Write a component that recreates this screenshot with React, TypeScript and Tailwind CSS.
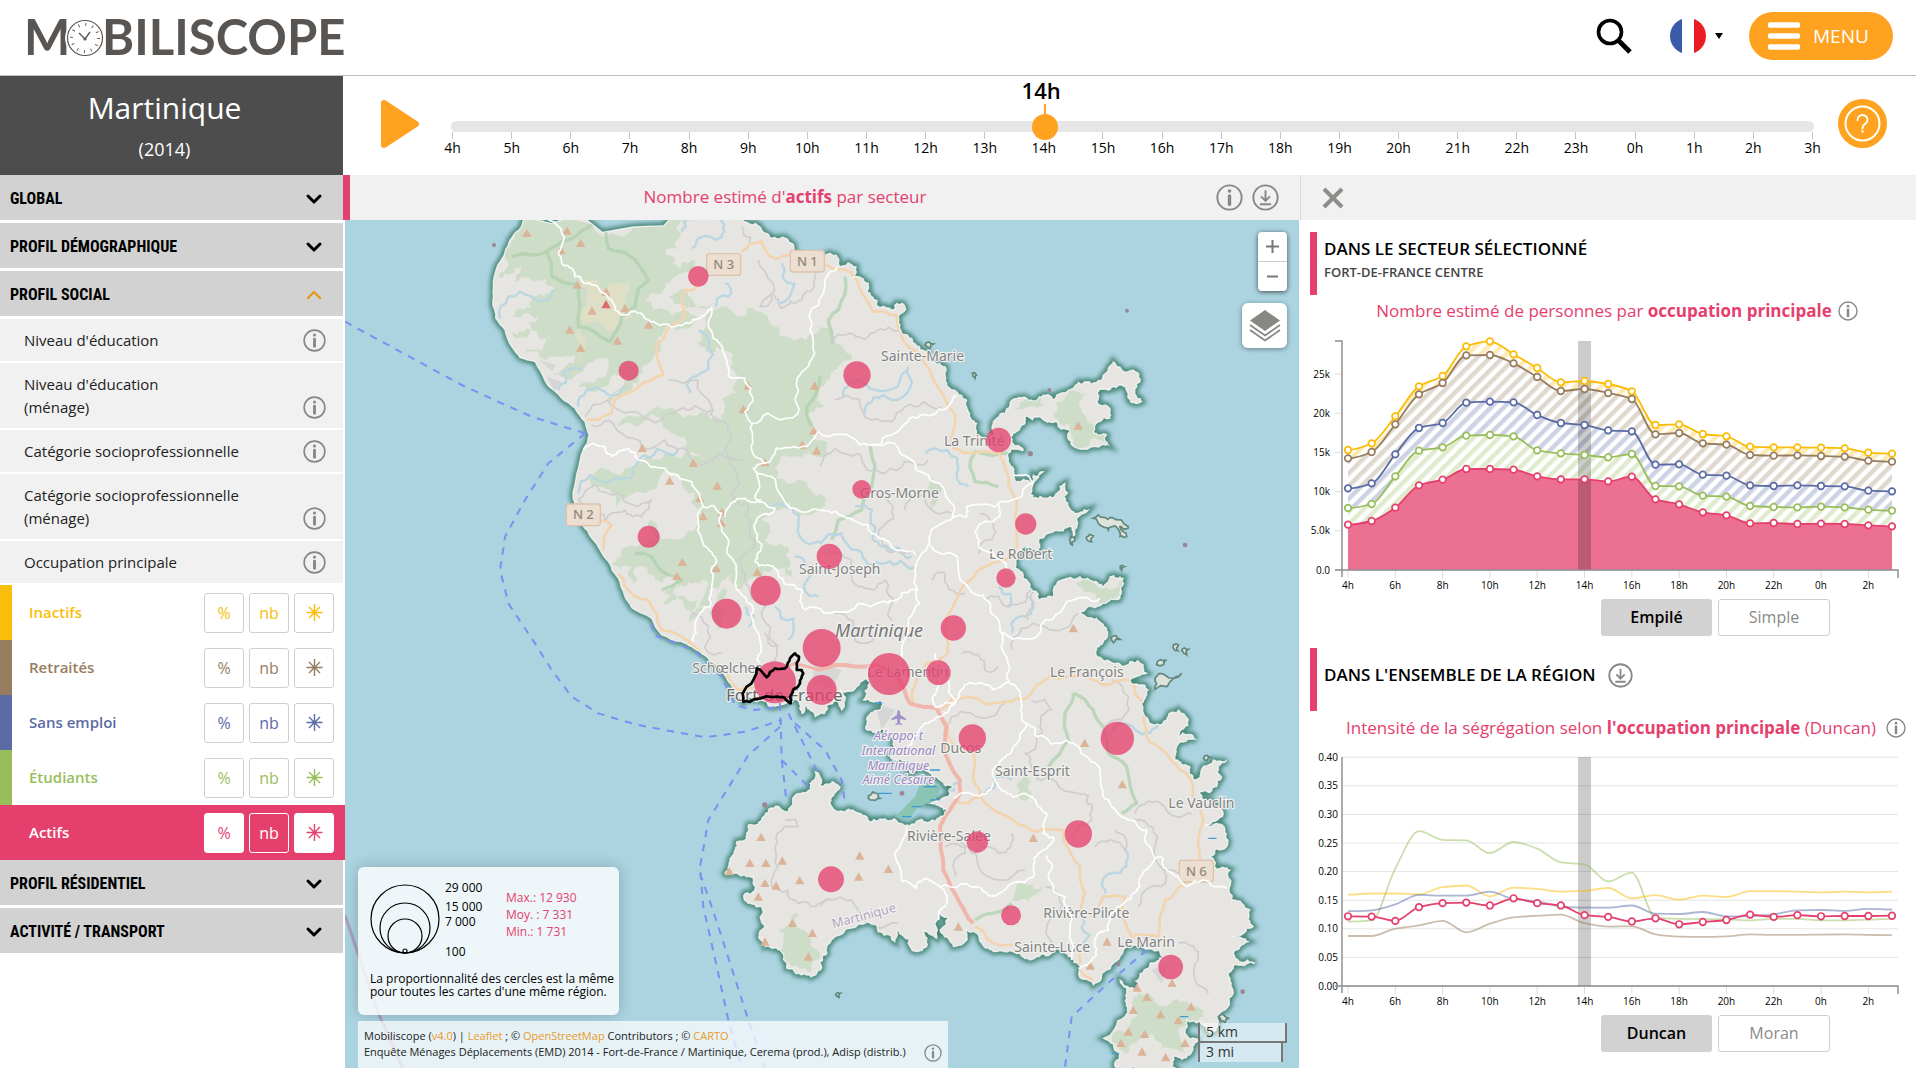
import React from "react";

const HOURS = ["4h", "5h", "6h", "7h", "8h", "9h", "10h", "11h", "12h", "13h", "14h", "15h", "16h", "17h", "18h", "19h", "20h", "21h", "22h", "23h", "0h", "1h", "2h", "3h"];

type Pt = [number, number];

/* ---------- icons ---------- */

function InfoIcon({ size = 24 }: { size?: number }) {
  return (
    <svg width={size} height={size} viewBox="0 0 24 24" className="shrink-0" aria-hidden="true">
      <circle cx="12" cy="12" r="10.8" fill="none" stroke="#878787" strokeWidth="1.7" />
      <circle cx="12" cy="6.2" r="1.6" fill="#878787" />
      <path d="M12 10.500v7.500" stroke="#878787" strokeWidth="3" strokeLinecap="round" />
    </svg>
  );
}

function DownloadIcon({ size = 24 }: { size?: number }) {
  return (
    <svg width={size} height={size} viewBox="0 0 24 24" className="shrink-0" aria-hidden="true">
      <g fill="none" stroke="#878787" strokeWidth="1.7">
        <circle cx="12" cy="12" r="10.8" />
        <path d="M12 5.5v9M8 11l4 4 4-4M7 18h10" />
      </g>
    </svg>
  );
}

function StarIcon() {
  return (
    <svg width="17" height="17" viewBox="0 0 17 17" aria-hidden="true">
      <path d="M8.500 0v17M0.500 8.500h16M3 3l11 11M14 3L3 14" stroke="currentColor" strokeWidth="1.4" fill="none" />
    </svg>
  );
}

function Chevron({ up }: { up?: boolean }) {
  return (
    <svg width="18" height="12" viewBox="0 0 18 12" aria-hidden="true">
      <path d={up ? "M3 9l6-6 6 6" : "M3 3l6 6 6-6"} fill="none" stroke={up ? "#e8961e" : "#000"} strokeWidth={up ? 2.4 : 3} strokeLinecap="round" strokeLinejoin="round" />
    </svg>
  );
}

/* ---------- header ---------- */

function Logo() {
  return (
    <a href="#" aria-label="Mobiliscope" className="ml-[22px] mt-[3px]">
      <svg width="330" height="60" viewBox="-6 -10 330 60" role="img" className="overflow-visible">
        <g fill="#595552" fontFamily="Lato, sans-serif" fontWeight="700" fontSize="49">
          <text x="-4" y="37">M</text>
          <text x="74" y="37">BILISCOPE</text>
        </g>
        <ellipse cx="57" cy="20" rx="20" ry="19" fill="#fff" />
        <circle cx="57" cy="20" r="17.500" fill="none" stroke="#595552" strokeWidth="1.2" />
        <circle cx="57" cy="20" r="13.500" fill="none" stroke="#595552" strokeWidth="3" strokeDasharray="0.9 6.170" />
        <path d="M51 15l6 6 5-7" fill="none" stroke="#595552" strokeWidth="1.4" />
        <circle cx="57" cy="21" r="1.600" fill="#595552" />
      </svg>
    </a>
  );
}

function Header() {
  return (
    <header className="flex h-[76px] items-center border-b border-[#bdbdbd] bg-white pb-[3px]">
      <Logo />
      <div className="ml-auto mr-[23px] flex items-center">
        <button aria-label="Rechercher" className="mr-[38px]">
          <svg width="36" height="36" viewBox="0 0 36 36">
            <circle cx="14" cy="14" r="11.500" fill="none" stroke="#000" strokeWidth="3.600" />
            <path d="M22 22l12 12" stroke="#000" strokeWidth="5" />
          </svg>
        </button>
        <button aria-label="Langue" className="mr-[26px] flex items-center gap-[9px]">
          <svg width="36" height="36" viewBox="0 0 36 36">
            <clipPath id="flag"><circle cx="18" cy="18" r="18" /></clipPath>
            <g clipPath="url(#flag)">
              <path d="M0 0h12v36H0z" fill="#3b5aa8" />
              <path d="M24 0h12v36H24z" fill="#eb1c26" />
            </g>
          </svg>
          <svg width="8" height="6" viewBox="0 0 8 6"><path d="M0 0h8L4 6z" /></svg>
        </button>
        <button className="flex h-12 w-[144px] items-center gap-[13px] rounded-3xl bg-[#ffa21f] pl-[19px] text-[19px] text-white">
          <svg width="32" height="28" viewBox="0 0 32 28">
            <path d="M2.500 3h27M2.500 14h27M2.500 25h27" stroke="#fff" strokeWidth="5.500" strokeLinecap="round" />
          </svg>
          MENU
        </button>
      </div>
    </header>
  );
}

/* ---------- sidebar ---------- */

const SUBITEMS = [
  ["Niveau d'éducation"],
  ["Niveau d'éducation", "(ménage)"],
  ["Catégorie socioprofessionnelle"],
  ["Catégorie socioprofessionnelle", "(ménage)"],
  ["Occupation principale"],
];

const GROUPS = [
  { name: "Inactifs", bar: "bg-[#f9be0b]", text: "text-[#f9be0b]" },
  { name: "Retraités", bar: "bg-[#977d60]", text: "text-[#977d60]" },
  { name: "Sans emploi", bar: "bg-[#5a6ba5]", text: "text-[#5a6ba5]" },
  { name: "Étudiants", bar: "bg-[#98be5c]", text: "text-[#98be5c]" },
];

function Section({ label, up }: { label: string; up?: boolean }) {
  return (
    <button className="mb-[3px] flex h-[45px] w-full items-center justify-between bg-[#d2d2d2] pl-[10px] pr-[20px] pt-[2px] text-left font-['Liberation_Sans_Narrow','Roboto_Condensed','Liberation_Sans',sans-serif] text-base font-bold text-black">
      {label}
      <Chevron up={up} />
    </button>
  );
}

function Sidebar() {
  const box = "flex h-10 w-10 items-center justify-center rounded-[3px] border text-base";
  return (
    <nav className="w-[343px] shrink-0">
      <div className="flex h-[99px] flex-col items-center bg-[#4d4d4d] pr-[14px] pt-[10px] text-white">
        <h1 className="text-[30px] leading-[44px]">Martinique</h1>
        <p className="mt-[3px] text-lg leading-8">(2014)</p>
      </div>
      <Section label="GLOBAL" />
      <Section label="PROFIL DÉMOGRAPHIQUE" />
      <Section label="PROFIL SOCIAL" up />
      <ul>
        {SUBITEMS.map((lines) => (
          <li key={lines.join()} className="mb-[2px] flex items-end justify-between bg-[#f1f1f1] pb-[9px] pl-[24px] pr-[17px] pt-[10px] text-[15px] leading-[23px] text-[#222]">
            <a href="#">{lines.map((l) => <span key={l} className="block">{l}</span>)}</a>
            <button aria-label="Informations"><InfoIcon size={23} /></button>
          </li>
        ))}
      </ul>
      {GROUPS.map((g) => (
        <div key={g.name} className={"flex h-[55px] items-center gap-[5px] pr-[9px] " + g.text}>
          <span className={"h-full w-3 " + g.bar} />
          <span className="ml-3 flex-1 text-[15px] font-semibold">{g.name}</span>
          <button className={box + " border-[#cfcfcf]"}>%</button>
          <button className={box + " border-[#cfcfcf]"}>nb</button>
          <button className={box + " border-[#cfcfcf]"} aria-label="Oursins"><StarIcon /></button>
        </div>
      ))}
      <div className="-mr-[2px] flex h-[55px] items-center gap-[5px] bg-[#e5406d] pl-[29px] pr-[11px] text-[#e5406d]">
        <span className="flex-1 text-[15px] font-semibold text-white">Actifs</span>
        <button className={box + " border-white bg-white"}>%</button>
        <button className={box + " border-white text-white"}>nb</button>
        <button className={box + " border-white bg-white"} aria-label="Oursins"><StarIcon /></button>
      </div>
      <Section label="PROFIL RÉSIDENTIEL" />
      <Section label="ACTIVITÉ / TRANSPORT" />
    </nav>
  );
}

/* ---------- timeline ---------- */

function Timeline() {
  return (
    <div className="flex h-[99px] items-start pl-[38px] pr-[29px]">
      <button aria-label="Lecture" className="mt-6">
        <svg width="38" height="48" viewBox="0 0 38 48">
          <path d="M3 3v42L35 24z" fill="#ffa21f" stroke="#ffa21f" strokeWidth="6" strokeLinejoin="round" />
        </svg>
      </button>
      <div className="relative ml-8 mt-[45px] min-w-0 flex-1">
        <output className="absolute -top-[46px] left-[43.3%] -translate-x-1/2 text-[22px] font-semibold leading-[30px] text-black">14h</output>
        <span className="absolute -top-[17px] left-[43.5%] h-3 w-[2px] bg-[#ffa21f]" />
        <input
          type="range" min={0} max={23} defaultValue={10} aria-label="Heure"
          className="relative block h-[11px] w-full appearance-none rounded-full bg-[#e6e6e6] [&::-webkit-slider-thumb]:h-[26px] [&::-webkit-slider-thumb]:w-[26px] [&::-webkit-slider-thumb]:appearance-none [&::-webkit-slider-thumb]:rounded-full [&::-webkit-slider-thumb]:bg-[#ffa21f]"
        />
        <div className="-mx-[28px] grid grid-cols-24 text-center text-sm leading-[18px] text-black">
          {HOURS.map((h) => (
            <div key={h} className="flex flex-col items-center">
              <span className="h-[7px] w-px bg-[#c4c4c4]" />
              {h}
            </div>
          ))}
        </div>
      </div>
      <button aria-label="Aide" className="ml-6 mt-[23px]">
        <svg width="49" height="49" viewBox="0 0 49 49">
          <circle cx="24.500" cy="24.500" r="24.500" fill="#ffa21f" />
          <circle cx="24.500" cy="24.500" r="17" fill="none" stroke="#fff" strokeWidth="2" />
          <path d="M19.500 21a5 4.800 0 1 1 8 3.600c-1.800 1.300-3 2.300-3 5" fill="none" stroke="#fff" strokeWidth="1.900" strokeLinecap="round" />
          <circle cx="24.500" cy="32.500" r="1.200" fill="#fff" />
        </svg>
      </button>
    </div>
  );
}

/* ---------- map ---------- */

function parse(s: string): Pt[] {
  return s.trim().split(/\s+/).map((p) => p.split(",").map(Number) as Pt);
}

function roughen(pts: Pt[], amount: number, depth: number, seed = 7): Pt[] {
  let s = seed;
  const rnd = () => {
    s = (s * 16807) % 2147483647;
    return s / 2147483647 - 0.5;
  };
  let cur = pts;
  for (let d = 0; d < depth; d++) {
    const next: Pt[] = [cur[0]];
    for (let i = 1; i < cur.length; i++) {
      const [x0, y0] = cur[i - 1];
      const [x1, y1] = cur[i];
      const k = rnd() * amount;
      next.push([(x0 + x1) / 2 - (y1 - y0) * k, (y0 + y1) / 2 + (x1 - x0) * k], cur[i]);
    }
    cur = next;
  }
  return cur;
}

function toPath(s: string, amount = 0.4, depth = 2, close = false) {
  const pts = parse(s);
  const r = roughen(close ? [...pts, pts[0]] : pts, amount, depth);
  return "M" + r.map((p) => Math.round(p[0]) + " " + Math.round(p[1])).join("L") + (close ? "Z" : "");
}

const WEST = "535,0 522,30 495,60 480,95 458,135 445,185 443,245 452,295 480,330 500,380 525,413 570,425 590,460 612,500 650,535 690,565 720,605 732,645 715,690 700,745 684,815 690,855 712,915 740,955 790,1025 820,1075 838,1125 860,1163 920,1195 950,1245 1010,1265 1040,1280 1085,1310 1120,1340 1150,1385 1170,1420 1195,1445";
const BAY = "1195,1445 1240,1440 1330,1445 1355,1440 1370,1480 1385,1455 1410,1490 1440,1480 1445,1460 1475,1435 1490,1470 1500,1440 1485,1410 1535,1400 1560,1375 1575,1390 1555,1440 1605,1440 1610,1465 1565,1495 1565,1530 1615,1525 1640,1550 1635,1610 1685,1625 1695,1660 1725,1630 1755,1660 1785,1680 1825,1700 1810,1730 1755,1750 1785,1760 1810,1770 1785,1790 1755,1805 1725,1800 1695,1820 1665,1810 1625,1800 1575,1805 1545,1780 1500,1775 1455,1750 1470,1720 1485,1700 1465,1685 1435,1700 1425,1695 1410,1655 1395,1690 1395,1710 1365,1720 1330,1775 1270,1768 1250,1800 1210,1815 1205,1855 1175,1865 1160,1910 1140,1960 1190,1968 1225,1970 1230,2015 1200,2020 1205,2045 1250,2060 1262,2120 1242,2140 1260,2180 1305,2190 1325,2245 1385,2265 1430,2245";
const SOUTH = "1430,2245 1432,2215 1445,2180 1495,2140 1595,2115 1650,2165 1660,2130 1715,2195 1745,2180 1735,2130 1775,2155 1770,2110 1785,2075 1810,2095 1785,2130 1825,2180 1860,2165 1865,2130 1905,2165 1945,2195 2025,2200 2075,2210 2125,2190 2170,2210 2205,2245 2245,2295 2285,2250 2335,2190 2385,2165 2445,2185 2455,2210 2415,2230 2385,2260 2375,2310 2325,2280 2345,2335 2340,2390 2275,2455 2325,2500 2320,2560 2500,2560";
const EAST = "2500,2560 2485,2510 2535,2505 2560,2460 2520,2440 2525,2400 2565,2405 2595,2440 2625,2380 2665,2320 2650,2260 2665,2235 2730,2230 2685,2225 2665,2200 2710,2165 2660,2150 2725,2120 2715,2070 2660,2040 2655,1950 2615,1950 2595,1910 2645,1880 2640,1830 2580,1815 2635,1780 2575,1740 2565,1715 2615,1700 2620,1640 2645,1620 2605,1620 2565,1670 2545,1680 2535,1640 2490,1620 2495,1580 2555,1560 2500,1550 2530,1500 2500,1470 2465,1500 2410,1500 2390,1450 2410,1410 2355,1380 2405,1360 2395,1335 2355,1325 2305,1330 2255,1310 2255,1280 2275,1265 2285,1225 2255,1195 2205,1175 2275,1150 2325,1135 2335,1075 2295,1070 2275,1100 2245,1085 2205,1070 2165,1075 2125,1130 2085,1140 2055,1105 2035,1065 2010,1045 2015,1005 2045,975 2075,990 2080,960 2125,935 2180,920 2180,955 2195,900 2230,870 2185,875 2160,845 2160,790 2140,815 2105,835 2065,835 2060,805 2095,755 2065,765 2055,790 2015,785 2005,755 1990,725 2000,685 2035,690 2000,665 2025,625 2040,590 2085,590 2135,605 2175,635 2180,675 2255,680 2290,675 2285,645 2245,635 2260,605 2295,595 2290,560 2255,545 2260,515 2305,500 2330,495 2350,535 2390,545 2370,515 2385,485 2365,450 2305,425 2275,465 2225,485 2185,505 2125,540 2095,525 2045,535 1995,555 1955,595 1950,645 1925,665 1895,645 1895,610 1870,575 1865,540 1835,515 1800,465 1800,440 1765,425 1725,390 1700,355 1665,315 1680,260 1655,250 1640,270 1600,260 1580,230 1570,190 1520,175 1533,140 1485,140 1460,103 1425,125 1390,120 1345,100 1340,70 1280,55 1245,20 1190,-10 535,-10";

const COAST =
  "M" +
  [roughen(parse(WEST), 0.15, 2), roughen(parse(BAY), 0.5, 3), roughen(parse(SOUTH), 0.5, 3), roughen(parse(EAST), 0.5, 3)]
    .flat()
    .map((p) => Math.round(p[0]) + " " + Math.round(p[1]))
    .join("L") +
  "Z";

const ISLETS = [
  "2245,895 2275,892 2300,892 2350,920 2335,928 2325,920 2345,950 2325,950 2310,918 2290,930 2265,915",
  "2225,950 2245,948 2240,965 2228,962",
  "2178,950 2190,960 2182,975 2176,970",
  "2430,1375 2460,1365 2510,1360 2490,1372 2430,1408",
  "2435,1335 2465,1320 2455,1335", "2485,1275 2500,1275 2498,1292 2488,1290", "2510,1292 2530,1288 2525,1305",
  "1570,1728 1600,1722 1605,1735 1575,1740", "2325,1040 2338,1040 2330,1050", "1882,460 1895,465 1890,475", "1740,375 1765,372 1755,385",
  "2620,2390 2650,2395 2640,2408", "1472,2325 1486,2320 1482,2332", "2575,1615 2600,1612 2585,1622", "2298,1253 2325,1258 2305,1268",
];

const FORESTS = [
  "530,0 690,0 860,0 1010,0 960,90 1030,150 960,190 900,240 960,270 1010,290 960,330 930,400 880,480 800,470 760,510 700,500 790,420 720,440 620,460 690,400 600,420 540,400 620,350 560,330 500,340 580,290 500,290 560,240 630,210 560,180 500,190 530,140 460,170 480,110 520,60",
  "1080,300 1180,290 1210,265 1290,320 1310,350 1400,340 1440,350 1520,420 1440,560 1390,590 1425,680 1380,700 1290,740 1390,800 1440,860 1380,880 1300,870 1250,900 1260,960 1330,980 1340,1070 1240,1080 1190,1110 1160,1060 1130,1080 1100,1150 1050,1180 1080,1080 1020,1100 960,1120 1000,1050 930,1080 900,1040 860,1100 860,1040 800,1030 870,980 940,970 920,900 1050,930 1060,870 1010,780 900,820 740,800 860,740 900,700 1020,700 1080,720 1000,650 820,620 830,600 1000,580 1130,600 1130,540 1180,470 1140,390 1060,370",
  "1425,320 1465,380 1490,415 1450,470 1425,500 1405,420",
  "880,440 930,400 945,360 900,380 860,430 820,510 780,540 860,510",
  "900,330 960,300 1060,290 1020,270 940,280", "970,230 1040,235 1110,250 1060,262 990,250",
  "960,160 1030,155 1045,120 1010,130 940,170 900,215 950,205",
  "1140,800 1200,800 1290,870 1230,900 1180,850", "950,1150 1010,1140 1080,1160 1030,1210 1060,1140", "1120,1120 1150,1110 1140,1180 1110,1240",
  "1425,660 1445,680 1460,700 1425,712 1390,700",
  "2135,545 2225,525 2225,595 2285,650 2285,675 2185,675 2175,625 2125,590",
  "2195,1090 2275,1105 2330,1070 2325,1125 2275,1150 2215,1115",
  "2030,545 2090,535 2100,555 2050,560 2010,570",
  "2000,2040 2060,1995 2090,2000 2080,2020 2010,2045",
  "2015,1690 2060,1685 2060,1720 2040,1745 2020,1730",
  "1340,2090 1360,2080 1370,2130 1400,2180 1425,2200 1400,2255 1340,2240 1310,2200 1300,2130",
  "2360,2350 2420,2330 2480,2350 2550,2360 2590,2400 2540,2400 2500,2440 2520,2500 2440,2500 2420,2440 2380,2460 2340,2500 2300,2460",
  "1760,770 1780,840 1770,880 1755,850",
];

const PARK_LINES = [
  "500,110 560,105 610,90 690,50 740,15 790,0",
  "605,95 620,170 700,195 700,320 795,365 830,290 870,260 880,205 910,180 850,105 790,85 770,0",
  "2185,1420 2160,1480 2170,1560 2110,1640",
  "2185,1420 2245,1470 2275,1520 2290,1600 2345,1640 2375,1750 2330,1780",
  "1500,170 1480,270 1450,300 1465,370",
  "1575,675 1580,800 1550,870 1480,900 1460,960",
  "1990,700 1890,695 1875,740 1890,785 1960,800",
  "1425,470 1385,560 1400,620",
  "870,1000 920,1010 960,1060 1010,1080 950,1110",
  "2000,2050 1940,2080 1890,2100",
];

const BORDERS = [
  "590,0 655,65 650,130 685,150 690,170 750,195 800,240 810,270 890,280 915,305 1000,315 1060,295 1100,265 1105,355 1145,420 1150,465 1200,475 1218,505 1200,575 1222,610 1220,675 1260,730 1225,745 1230,835 1290,865 1230,930 1250,980 1230,1025 1290,1045 1370,1110 1380,1170 1475,1175 1610,1145 1670,1120 1720,1110",
  "1222,610 1320,595 1360,575 1355,500 1390,440 1395,330 1440,180 1475,140",
  "1260,730 1350,680 1420,635 1545,675 1575,675 1640,645 1705,590 1765,585 1835,525",
  "1575,675 1700,720 1750,765 1820,850 1825,890 1755,950 1750,975 1725,1010 1715,1100 1725,1150 1690,1200 1680,1380",
  "715,690 780,680 800,710 850,685 880,720 960,745 1040,785 1075,860 1060,900 1070,960 1110,1010 1100,1100 1095,1160 1050,1210 1045,1265",
  "1075,860 1130,880 1130,920 1155,1010 1170,1090 1200,1130 1240,1240 1245,1330",
  "1140,890 1200,835 1250,840",
  "1230,755 1300,815 1425,870 1515,895 1605,955 1715,1005",
  "1755,975 1865,1095 1915,1125 1945,1185 1965,1235 2075,1250 2165,1145 2265,1135",
  "2005,765 2065,790 2030,830 1865,860 1865,890 1820,890",
  "1960,845 1945,905 1890,935 1905,985 1975,1025 2010,1065",
  "1965,1235 1975,1260 1985,1310 1990,1380 2025,1425 2045,1510 2005,1580 1970,1620 1945,1670 1985,1720 2060,1730 2105,1780 2095,1840 2125,1850 2115,1875 2080,1900 2065,1970 1955,2025 1910,2005 1785,2000 1740,1975 1715,2005 1670,1985 1685,1820",
  "1990,1385 1895,1390 1845,1415 1830,1450 1775,1490 1715,1545 1690,1580",
  "2045,1510 2075,1550 2165,1560 2225,1610 2265,1660 2290,1740 2330,1790 2405,1830 2430,1915 2385,2000 2345,2040 2295,2090 2290,2130 2255,2150 2240,2220 2200,2245",
  "2430,1915 2455,1915 2465,1950 2525,2000 2575,1980 2645,2005",
  "2105,1905 2110,1970 2160,2030 2175,2140 2180,2220",
  "1945,1690 1885,1725 1825,1735",
  "1785,2000 1800,2060 1780,2100",
  "1770,1300 1780,1400 1770,1460 1830,1450 1810,1380",
];

const ROADS = [
  "1190,95 1250,65 1290,115 1345,105 1425,130 1515,155 1585,275 1655,285 1665,330 1735,425 1795,525 1830,585 1825,685 1885,700 1965,700 1980,745 2015,845 2015,935 1995,1015 1895,1055 1845,1115 1810,1275 1810,1298 1745,1330 1715,1380 1705,1450",
  "1060,200 1020,210 1020,290 975,320 935,370 955,465 880,500 820,530 800,580 760,600 725,600",
  "735,905 800,915 775,990", "820,1060 840,1100 910,1140 950,1230 1060,1290 1130,1350 1180,1410 1240,1400",
  "1785,1470 1865,1430 1985,1445 2045,1435 2115,1370 2205,1360 2275,1395 2355,1380 2400,1460 2405,1550 2465,1600 2525,1660 2575,1800 2565,1920 2515,1995 2460,2040 2440,2150 2360,2150 2340,2030 2275,2030 2260,2060",
  "1785,1480 1810,1550 1885,1600 1885,1680 1905,1730 2005,1800 2075,1835 2155,1830 2205,1940 2220,2020 2210,2070",
  "1905,1730 1830,1745", "1890,2120 1925,2155 2005,2175", "2185,2170 2200,2240 2245,2280",
];

const MINOR = [
  "970,480 1100,560 1150,620 1145,700 1160,820 1210,860 1230,960 1190,1010 1200,1060 1260,1160 1300,1280",
  "720,590 860,575 1000,570 1100,570", "740,615 830,640 960,660 1050,730 1200,720", "700,840 820,820 920,840 890,890 840,870 780,900 700,840",
  "1465,370 1510,340 1600,330 1660,330", "1470,540 1580,600 1680,560 1790,560", "1425,740 1540,700 1620,760 1750,720", "1620,830 1600,950 1680,1000 1720,1000",
  "1680,870 1740,830 1820,880", "1440,1000 1540,1100 1620,1080 1640,1200", "1470,1180 1530,1260 1600,1240", "1860,1120 1800,1060 1760,1080", "1905,880 1940,960 1900,1000",
  "1920,1140 1990,1160 2060,1100 2050,1200", "2000,1290 2100,1220 2200,1180", "2060,1440 2120,1470 2090,1540 2040,1600 2060,1640 2140,1700 2230,1730 2240,1800 2180,1850",
  "2300,1380 2330,1500 2270,1560", "2370,1780 2460,1760 2540,1780", "2370,1800 2430,1880 2500,1960", "2250,1880 2340,1890 2310,1830", "1800,1880 1900,1940 2040,1950",
  "1800,1850 1860,1900 1830,1970", "2100,2000 2140,2080 2120,2180", "2000,1840 1960,1900 1880,1900", "1320,1800 1360,1820 1290,1880 1280,2000 1360,2050 1460,2040", "1425,2060 1540,2070 1660,2110",
  "1850,1300 1920,1350 1960,1340", "1800,1550 1880,1480 1980,1450", "1040,1180 1080,1280 1130,1300", "1260,1240 1280,1330", "1190,20 1200,90", "1240,120 1245,260 1280,220 1310,265 1370,240 1420,150",
  "2445,1940 2450,2000 2380,2060", "2500,2170 2560,2220 2590,2320",
];

const RIVERS = [
  "465,295 560,230 630,210", "640,510 710,450", "700,560 780,515 840,500", "1060,330 1050,470 1035,520", "1140,190 1150,230 1110,260", "1010,35 1045,0", "1125,0 1110,60 1040,85",
  "700,820 800,780 880,720 1000,690", "1310,130 1305,250", "1495,530 1560,490 1690,450", "1560,580 1640,540 1690,440", "1280,860 1360,920 1430,970", "1350,1010 1380,1090 1420,1130",
  "1740,700 1840,750 1870,800", "1530,860 1590,920 1610,980 1700,1010", "1425,970 1540,990 1620,1030 1710,1040", "2050,1130 2040,1190 2000,1240", "1960,1100 1990,1160",
  "1200,1160 1210,1220", "1290,1160 1330,1260", "2340,1890 2300,1960 2280,2020", "2215,2090 2190,2180", "1850,1680 1790,1700", "1920,1720 2000,1680", "2440,1500 2370,1530 2290,1540",
];

const FERRIES = [
  "0,305 350,495 560,590 720,640", "720,640 610,730 540,840 480,950 465,1050 490,1150 570,1270 620,1350 680,1430 760,1480 880,1515 1080,1552 1200,1535 1310,1500",
  "1305,1520 1210,1605 1090,1800 1065,1940 1075,2060 1150,2400 1190,2544", "1065,1960 1120,2120 1210,2400 1260,2544",
  "1305,1450 1310,1620 1325,1750", "1310,1620 1390,1700", "1330,1480 1420,1660", "1350,1510 1440,1590 1490,1680 1500,1750",
  "2405,2190 2300,2280 2180,2390 2160,2540", "920,1210 925,1245 1000,1270 1050,1295 1130,1370 1170,1455 1230,1470 1300,1460",
];

const PEAKS = parse("546,40 666,33 707,70 648,92 697,195 783,216 741,273 840,265 674,330 817,363 707,385 911,315 1209,498 1195,569 1409,498 1406,633 1372,675 1415,693 1260,728 892,685 1045,730 974,783 1117,798 1064,836 1131,877 1074,890 1129,910 1012,1027 996,1069 1114,1046 1237,1057 2200,618 2185,1226 1248,1852 1215,1930 1263,1930 1312,1923 1153,1955 1260,1990 1293,1998 1364,1982 1240,2031 1342,2110 1402,2140 1260,2166 1390,2211 1544,1908 1630,1948 1541,1971 1840,2121 2065,1855 2219,1570 2332,1694 2286,2166 2236,2238 2481,2290 2376,2304 2406,2332 2365,2371 2538,2361 2447,2384 2500,2402 2350,2436 2399,2443 2328,2470 2391,2496 2462,2513 2520,2470");

const CIRCLES = [
  [1060, 169, 31], [851, 452, 30], [911, 950, 33], [1145, 1181, 45], [1262, 1112, 45], [1536, 465, 41], [1961, 660, 37], [1550, 808, 28], [2042, 912, 32], [1453, 1009, 38], [1983, 1074, 29], [1825, 1224, 38], [1430, 1284, 57], [1290, 1387, 63], [1430, 1410, 45], [1632, 1362, 63], [1780, 1358, 37], [1882, 1554, 41], [2317, 1555, 50], [2200, 1842, 41], [1897, 1866, 32], [1458, 1978, 39], [1998, 2086, 30], [2477, 2241, 37],
];

const TOWNS: [string, number, number][] = [
  ["Sainte-Marie", 1608, 422], ["La Trinité", 1797, 678], ["Gros-Morne", 1545, 835], ["Le Robert", 1932, 1018], ["Saint-Joseph", 1362, 1061], ["Schœlcher", 1042, 1360], ["Le Lamentin", 1567, 1372], ["Le François", 2115, 1372], ["Ducos", 1786, 1600], ["Saint-Esprit", 1950, 1668], ["Le Vauclin", 2470, 1763], ["Rivière-Salée", 1686, 1863], ["Rivière-Pilote", 2095, 2093], ["Sainte-Luce", 2008, 2197], ["Le Marin", 2317, 2181],
];

const SHIELDS: [string, number, number][] = [["N 3", 1085, 101], ["N 1", 1336, 91], ["N 2", 664, 852], ["N 6", 2503, 1921]];

function Lines({ data, amount = 0.4, depth = 2 }: { data: string[]; amount?: number; depth?: number }) {
  return <>{data.map((d) => <path key={d} d={toPath(d, amount, depth)} />)}</>;
}

function MapDrawing() {
  return (
    <svg viewBox="0 0 2862 2544" preserveAspectRatio="xMidYMid slice" className="absolute inset-0 h-full w-full" role="img" aria-label="Carte de la Martinique">
      <defs>
        <clipPath id="land"><path d={COAST} /></clipPath>
        <filter id="soft" x="-5%" y="-5%" width="110%" height="110%"><feGaussianBlur stdDeviation="6" /></filter>
      </defs>
      <rect x="-500" y="-500" width="4000" height="4000" fill="#abd3e0" />
      <path d="M0 2085L100 2380L180 2560" stroke="#a98bb0" strokeWidth="9" opacity="0.7" fill="none" />
      <path d={COAST} fill="none" stroke="#4a8878" strokeWidth="20" filter="url(#soft)" />
      <path d={COAST} fill="#e7e5e2" />
      <g clipPath="url(#land)" fill="none" strokeLinejoin="round">
        <g fill="#cdddc8">{FORESTS.map((d) => <path key={d} d={toPath(d, 0.7, 3, true)} />)}</g>
        <path d={toPath("705,200 760,190 790,205 850,190 840,240 860,290 820,310 790,340 740,310 710,430 700,420 720,320 700,290", 0.8, 3, true)} fill="#dedfc6" />
        <path d="M583 420l50 15-10 20zM605 470l45 15-20 30zM1590 1450l60 20-40 60zM1410 1330l80 20-30 60-60-20zM2420 2250l50-20-20 60z" fill="#d6d6d6" />
        <g stroke="#aed0ae" strokeWidth="10" opacity="0.75"><Lines data={PARK_LINES} amount={0.2} /></g>
        <g stroke="#b9d6e1" strokeWidth="7"><Lines data={RIVERS} amount={0.7} depth={3} /></g>
        <g stroke="#cfcdce" strokeWidth="5"><Lines data={MINOR} amount={0.6} depth={3} /></g>
        <g stroke="#f2d4af" strokeWidth="8"><Lines data={ROADS} amount={0.3} /></g>
        <path d={toPath("1425,1345 1500,1335 1595,1335 1655,1370 1695,1450 1775,1465 1805,1520 1795,1590 1845,1680 1845,1720 1785,1820 1795,1950 1845,2050 1885,2110", 0.12)} stroke="#f0b5ab" strokeWidth="12" />
        <path d="M1250 1370L1350 1330L1425 1350L1480 1335" stroke="#f0b5ab" strokeWidth="9" />
      </g>
      <path d="M1650 1790l60-60 20-50 60 20-20 40-50 20-30 40z" fill="#8ac5b4" />
      <path d="M1600 1720h40M1735 1700h40M1700 1760h30M1755 1650h30M1690 1640h25M1755 1740h30M1710 1690h25M1670 1790h30M2590 1855h25M2505 2390h25M2300 2500h20M1590 1450h25" stroke="#3f9bd8" strokeWidth="4" />
      <path d={COAST} fill="none" stroke="#fff" strokeWidth="4" opacity="0.7" />
      <g fill="#dfe3dc" stroke="#62867c" strokeWidth="5">{ISLETS.map((d) => <path key={d} d={toPath(d, 0.6, 2, true)} />)}</g>
      <g fill="none" stroke="#7d8ff2" strokeWidth="6" strokeDasharray="22 21">{FERRIES.map((d) => <path key={d} d={toPath(d, 0, 1)} />)}</g>
      <g fill="#9c8493"><circle cx="447" cy="75" r="6" /><circle cx="1259" cy="1755" r="8" /><circle cx="2056" cy="701" r="8" /><circle cx="2520" cy="975" r="7" /><circle cx="2346" cy="272" r="6" /><circle cx="2693" cy="2315" r="7" /><circle cx="2113" cy="510" r="6" /><circle cx="2320" cy="2233" r="6" /><circle cx="1671" cy="1720" r="7" /></g>
      <g fill="#dbb498">{PEAKS.map(([x, y]) => <path key={x + "-" + y} d={`M${x - 14} ${y + 11}h28l-14-25z`} />)}</g>
      <path d="M769 265h28l-14-25z" fill="#dc6a6a" />
      <g>
        {SHIELDS.map(([t, x, y]) => (
          <g key={t}>
            <rect x={x} y={y} width="102" height="65" rx="8" fill="#ecdfd2" stroke="#dcc3aa" strokeWidth="4" />
            <text x={x + 51} y={y + 46} textAnchor="middle" fontFamily="'Noto Sans', sans-serif" fontSize="39" fontWeight="500" fill="#918a76">{t}</text>
          </g>
        ))}
      </g>
      <g fontFamily="'Noto Sans', sans-serif" fontSize="42" fill="#828282" stroke="#f1f1ef" strokeWidth="7" paintOrder="stroke" strokeLinejoin="round">
        {TOWNS.map(([t, x, y]) => <text key={t} x={x} y={y}>{t}</text>)}
        <text x="1143" y="1443" fontSize="51" fill="#666">Fort-de-France</text>
        <text x="1470" y="1252" fontSize="54" fontStyle="italic" fill="#777">Martinique</text>
        <g fill="#9a88c4" fontStyle="italic" fontSize="38" textAnchor="middle">
          <text x="1660" y="1560">Aéroport</text>
          <text x="1660" y="1605">International</text>
          <text x="1660" y="1650">Martinique</text>
          <text x="1660" y="1693">Aimé Césaire</text>
        </g>
        <text x="1465" y="2125" fontSize="38" fill="#b3a3bd" transform="rotate(-15 1465 2125)">Martinique</text>
      </g>
      <path d="M1661 1470c4 0 5 8 5 14l17 12v5l-17-5-1 12 6 5v3l-10-3-10 3v-3l6-5-1-12-17 5v-5l17-12c0-6 1-14 5-14z" fill="#a193c8" />
      <g fill="none" stroke="#fff" strokeWidth="5" strokeLinejoin="round"><Lines data={BORDERS} amount={0.45} depth={3} /></g>
      <g fill="#e5406d" fillOpacity="0.77">{CIRCLES.map(([x, y, r]) => <circle key={x + "-" + y} cx={x} cy={y} r={r} />)}</g>
      <path d={toPath("1195,1445 1205,1400 1235,1345 1265,1372 1290,1345 1320,1345 1335,1315 1350,1300 1362,1310 1355,1350 1370,1350 1375,1360 1365,1390 1335,1430 1337,1450 1320,1435 1300,1430 1230,1437", 0.3, 2, true)} fill="none" stroke="#000" strokeWidth="8" strokeLinejoin="round" />
    </svg>
  );
}

function Legend() {
  return (
    <div className="w-[261px] rounded-md bg-white/80 px-3 pb-[17px] pt-[14px] text-xs text-black shadow-[0_0_15px_rgba(0,0,0,0.2)]">
      <div className="flex">
        <svg width="125" height="82" viewBox="0 0 125 82" role="img" aria-label="Échelle des cercles" className="overflow-visible">
          <g fill="none" stroke="#000" strokeWidth="1.200">
            <circle cx="35" cy="38" r="34" /><circle cx="35" cy="47" r="25" /><circle cx="35" cy="55" r="17" /><circle cx="35" cy="70" r="2" />
          </g>
          <g fontSize="12">
            <text x="75" y="11">29 000</text><text x="75" y="30">15 000</text><text x="75" y="45">7 000</text><text x="75" y="75">100</text>
          </g>
        </svg>
        <dl className="ml-[11px] mt-2 font-medium leading-[17px] text-[#e5406d]">
          <div>Max.: 12 930</div>
          <div>Moy. : 7 331</div>
          <div>Min.: 1 731</div>
        </dl>
      </div>
      <p className="mt-[9px] whitespace-nowrap leading-[13px]">La proportionnalité des cercles est la même<br />pour toutes les cartes d'une même région.</p>
    </div>
  );
}

function MapPanel() {
  const link = "text-[#ea9a28]";
  return (
    <section className="flex min-w-0 flex-1 flex-col">
      <div className="flex h-[45px] items-center border-l-[7px] border-[#e5406d] bg-[#f1f1f1] pb-px pr-[21px] text-[17px] text-[#e5406d]">
        <h2 className="flex-1 pl-[4px] text-center">Nombre estimé d'<b>actifs</b> par secteur</h2>
        <div className="flex gap-[9px]">
          <button aria-label="Informations"><InfoIcon size={27} /></button>
          <button aria-label="Télécharger"><DownloadIcon size={27} /></button>
        </div>
      </div>
      <div className="relative ml-[2px] mr-px min-h-[848px] flex-1 overflow-hidden">
        <MapDrawing />
        <div className="absolute right-3 top-3 flex flex-col items-end gap-3">
          <div className="flex w-[29px] flex-col rounded-[4px] bg-white shadow-[0_1px_5px_rgba(0,0,0,0.65)]">
            <button className="flex h-[30px] items-center justify-center border-b border-[#ccc]" aria-label="Zoom avant"><svg width="13" height="13" viewBox="0 0 13 13"><path d="M6.500 0v13M0 6.500h13" stroke="#777" strokeWidth="2" /></svg></button>
            <button className="flex h-[29px] items-center justify-center" aria-label="Zoom arrière"><svg width="11" height="13" viewBox="0 0 11 13"><path d="M0 6.500h11" stroke="#777" strokeWidth="2" /></svg></button>
          </div>
          <button className="flex h-[45px] w-[45px] items-center justify-center rounded-md bg-white shadow-[0_1px_5px_rgba(0,0,0,0.4)]" aria-label="Calques">
            <svg width="32" height="33" viewBox="0 0 32 33">
              <path d="M16 1L31 11.500 16 22 1 11.500z" fill="#878783" />
              <path d="M1 16l15 10.500L31 16M1 21l15 10.500L31 21" fill="none" stroke="#878783" strokeWidth="1.800" />
            </svg>
          </button>
        </div>
        <div className="absolute bottom-0 left-[13px] flex flex-col items-start gap-[6px]">
          <Legend />
          <div className="flex h-[47px] min-w-[590px] items-end justify-between bg-white/70 pb-1 pl-[6px] pr-[6px] text-[11px] leading-4 text-[#222]">
            <p className="pb-1">
              Mobiliscope (<a href="#" className={link}>v4.0</a>) | <a href="#" className={link}>Leaflet</a> ; © <a href="#" className={link}>OpenStreetMap</a> Contributors ; © <a href="#" className={link}>CARTO</a>
              <br />
              Enquête Ménages Déplacements (EMD) 2014 - Fort-de-France / Martinique, Cerema (prod.), Adisp (distrib.)
            </p>
            <button aria-label="Informations" className="ml-[6px] pb-[2px]"><InfoIcon size={18} /></button>
          </div>
        </div>
        <div className="absolute bottom-[6px] right-3 w-[89px] text-sm leading-[18px] text-[#333]">
          <div className="h-[20px] border-2 border-t-0 border-[#777] bg-white/50 pl-[6px]">5 km</div>
          <div className="h-[19px] w-[85px] border-x-2 border-[#777] bg-white/50 pl-[6px]">3 mi</div>
        </div>
      </div>
    </section>
  );
}

/* ---------- charts ---------- */

const STACK = [
  { color: "#fbbc05", id: "h-yellow", v: [15306, 16156, 19600, 23427, 24745, 28529, 29167, 27508, 25765, 23937, 24107, 23724, 22789, 18495, 18580, 17347, 17049, 15731, 15646, 15646, 15604, 15519, 14966, 14838] },
  { color: "#977d60", id: "h-brown", v: [14243, 15051, 18580, 22406, 23852, 27381, 27423, 26361, 24617, 22832, 23087, 22577, 21811, 17304, 17474, 16156, 15986, 14668, 14583, 14626, 14541, 14456, 13946, 13818] },
  { color: "#5a6ba5", id: "h-blue", v: [10417, 11054, 14753, 18112, 18750, 21344, 21471, 21386, 19770, 18750, 18495, 17815, 17687, 13435, 13478, 12160, 12032, 10799, 10714, 10799, 10714, 10672, 10119, 10034] },
  { color: "#98be5c", id: "h-green", v: [7908, 8418, 11947, 15221, 15646, 17134, 17219, 17049, 15264, 14881, 14668, 14371, 14796, 10714, 10672, 9481, 9354, 8163, 8036, 7993, 8078, 7993, 7696, 7568] },
  { color: "#e5406d", id: "", v: [5782, 6250, 7951, 10799, 11522, 12883, 12883, 12798, 11947, 11565, 11565, 11310, 11905, 9014, 8376, 7355, 6973, 5952, 5995, 5867, 5910, 5867, 5697, 5570] },
];

const FAINT = [
  { color: "#98be5c", v: [0.1125, 0.115, 0.2055, 0.271, 0.256, 0.255, 0.2325, 0.252, 0.2405, 0.2165, 0.213, 0.183, 0.1985, 0.12, 0.1175, 0.117, 0.1165, 0.115, 0.1175, 0.1175, 0.115, 0.115, 0.116, 0.1175] },
  { color: "#fbbc05", v: [0.16, 0.162, 0.162, 0.1605, 0.173, 0.176, 0.157, 0.172, 0.17, 0.165, 0.1665, 0.1715, 0.1535, 0.159, 0.151, 0.158, 0.156, 0.166, 0.166, 0.165, 0.164, 0.165, 0.164, 0.165] },
  { color: "#5a6ba5", v: [0.131, 0.1325, 0.143, 0.1595, 0.158, 0.158, 0.165, 0.152, 0.148, 0.139, 0.137, 0.137, 0.141, 0.1265, 0.126, 0.1295, 0.122, 0.122, 0.1255, 0.1325, 0.133, 0.1315, 0.135, 0.134] },
  { color: "#977d60", v: [0.0875, 0.0875, 0.1005, 0.106, 0.114, 0.094, 0.109, 0.12, 0.123, 0.125, 0.11, 0.104, 0.1045, 0.0905, 0.0865, 0.086, 0.087, 0.0905, 0.0895, 0.0895, 0.09, 0.0905, 0.0895, 0.089] },
];
const ACTIVE = [0.122, 0.1215, 0.114, 0.138, 0.145, 0.146, 0.141, 0.1535, 0.145, 0.141, 0.124, 0.121, 0.113, 0.1185, 0.108, 0.112, 0.1155, 0.125, 0.121, 0.124, 0.122, 0.1225, 0.1225, 0.123];

const xAt = (i: number) => 48 + (i * 544) / 23;
const ZERO = 242;

function curve(v: number[], scale: number) {
  const pts: Pt[] = v.map((d, i) => [xAt(i), ZERO - d * scale]);
  const slope = pts.map((p, i) => {
    if (i === 0 || i === pts.length - 1) return 0;
    const a = p[1] - pts[i - 1][1];
    const b = pts[i + 1][1] - p[1];
    return a * b <= 0 ? 0 : (2 * a * b) / (a + b);
  });
  let d = `M${pts[0][0].toFixed(1)} ${pts[0][1].toFixed(1)}`;
  for (let i = 1; i < pts.length; i++) {
    const w = (pts[i][0] - pts[i - 1][0]) / 3;
    d += `C${(pts[i - 1][0] + w).toFixed(1)} ${(pts[i - 1][1] + slope[i - 1] / 3).toFixed(1)} ${(pts[i][0] - w).toFixed(1)} ${(pts[i][1] - slope[i] / 3).toFixed(1)} ${pts[i][0].toFixed(1)} ${pts[i][1].toFixed(1)}`;
  }
  return d;
}

function Axes({ top }: { top: boolean }) {
  return (
    <g>
      <g stroke="#ddd" strokeWidth="1">
        {HOURS.map((h, i) => (i % 2 === 0 ? <path key={h} d={`M${xAt(i)} 242v8`} /> : null))}
      </g>
      <g fontSize="10" textAnchor="middle" fill="#000">
        {HOURS.map((h, i) => (i % 2 === 0 ? <text key={h} x={xAt(i)} y="261">{h}</text> : null))}
      </g>
      <path d={(top ? "M35 13h7" : "M42 13") + "V249M42 242H598v8M35 242h7"} fill="none" stroke="#8a8a8a" strokeWidth="1.400" />
    </g>
  );
}

function Dots({ v, scale, color }: { v: number[]; scale: number; color: string }) {
  return <g fill="#fff" stroke={color} strokeWidth="1.700">{v.map((d, i) => <circle key={i} cx={xAt(i)} cy={ZERO - d * scale} r="3.300" />)}</g>;
}

function StackChart() {
  const s = 39.2 / 5000;
  return (
    <svg viewBox="0 0 616 268" className="block w-full" role="img" aria-label="Nombre estimé de personnes par occupation principale">
      <defs>
        {STACK.filter((l) => l.id).map((l) => (
          <pattern key={l.id} id={l.id} width="9" height="9" patternUnits="userSpaceOnUse" patternTransform="rotate(45)">
            <rect width="4.500" height="9" fill={l.color} fillOpacity="0.3" />
          </pattern>
        ))}
      </defs>
      {["0.0", "5.0k", "10k", "15k", "20k", "25k"].map((t, i) => (
        <g key={t}>
          {i > 0 && <path d={`M35 ${ZERO - i * 39.2}h7`} stroke="#ddd" />}
          <text x="30" y={ZERO + 3.500 - i * 39.2} fontSize="10" textAnchor="end">{t}</text>
        </g>
      ))}
      {STACK.map((l) => (
        <g key={l.color}>
          <path d={curve(l.v, s) + `V${ZERO}H48Z`} fill="#fff" />
          <path d={curve(l.v, s) + `V${ZERO}H48Z`} fill={l.id ? `url(#${l.id})` : l.color} fillOpacity={l.id ? 1 : 0.75} />
        </g>
      ))}
      <rect x="278" y="13" width="13" height="229" fill="#000" fillOpacity="0.2" />
      <Axes top />
      {STACK.map((l) => (
        <g key={l.color}>
          <path d={curve(l.v, s)} fill="none" stroke={l.color} strokeWidth="1.800" />
          <Dots v={l.v} scale={s} color={l.color} />
        </g>
      ))}
    </svg>
  );
}

function SegregationChart() {
  const s = 228.5 / 0.4;
  return (
    <svg viewBox="0 0 616 268" className="block w-full" role="img" aria-label="Intensité de la ségrégation selon l'occupation principale">
      {["0.00", "0.05", "0.10", "0.15", "0.20", "0.25", "0.30", "0.35", "0.40"].map((t, i) => (
        <g key={t}>
          <path d={`M42 ${ZERO - i * 28.6}H598`} stroke="#e4e4e4" />
          <text x="38" y={ZERO + 3.500 - i * 28.6} fontSize="10" textAnchor="end">{t}</text>
        </g>
      ))}
      <rect x="278" y="13" width="13" height="229" fill="#000" fillOpacity="0.2" />
      <Axes top={false} />
      {FAINT.map((l) => <path key={l.color} d={curve(l.v, s)} fill="none" stroke={l.color} strokeWidth="1.800" opacity="0.5" />)}
      <path d={curve(ACTIVE, s)} fill="none" stroke="#e5406d" strokeWidth="1.800" />
      <Dots v={ACTIVE} scale={s} color="#e5406d" />
    </svg>
  );
}

function Toggle({ on, off }: { on: string; off: string }) {
  return (
    <div className="mb-3 mt-[3px] flex justify-end gap-[6px] pr-[86px] text-base">
      <button className="h-[37px] w-[111px] rounded-[3px] bg-[#d2d2d2] pb-px font-semibold text-black">{on}</button>
      <button className="h-[37px] w-[112px] rounded-[3px] border border-[#cfcfcf] pb-px text-[#8a8a8a]">{off}</button>
    </div>
  );
}

function ChartsPanel() {
  return (
    <aside className="w-[616px] shrink-0">
      <div className="flex h-[45px] items-center border-l border-[#ddd] bg-[#f1f1f1] pl-[21px]">
        <button aria-label="Fermer">
          <svg width="22" height="22" viewBox="0 0 22 22"><path d="M2 2l18 18M20 2L2 20" stroke="#8d8d89" strokeWidth="4" /></svg>
        </button>
      </div>
      <section className="pt-3">
        <div className="ml-[10px] flex h-[63px] flex-col border-l-[7px] border-[#e5406d] pl-[7px] pt-[5px]">
          <h3 className="text-[17px] font-semibold leading-6 text-black">DANS LE SECTEUR SÉLECTIONNÉ</h3>
          <p className="text-[13px] font-semibold leading-[22px] text-[#444]">FORT-DE-FRANCE CENTRE</p>
        </div>
        <div className="flex h-[33px] items-center justify-center gap-[6px] pb-px pl-[18px] text-[17px] text-[#e5406d]">
          <h4>Nombre estimé de personnes par <b>occupation principale</b></h4>
          <button aria-label="Informations"><InfoIcon size={20} /></button>
        </div>
        <StackChart />
        <Toggle on="Empilé" off="Simple" />
      </section>
      <section>
        <div className="ml-[10px] flex h-[63px] items-center gap-3 border-l-[7px] border-[#e5406d] pb-[9px] pl-[7px]">
          <h3 className="text-[17px] font-semibold leading-6 text-black">DANS L'ENSEMBLE DE LA RÉGION</h3>
          <button aria-label="Télécharger"><DownloadIcon size={25} /></button>
        </div>
        <div className="flex h-[33px] items-center justify-end gap-[10px] pr-[10px] text-[17px] text-[#e5406d]">
          <h4>Intensité de la ségrégation selon <b>l'occupation principale</b> (Duncan)</h4>
          <button aria-label="Informations"><InfoIcon size={20} /></button>
        </div>
        <SegregationChart />
        <Toggle on="Duncan" off="Moran" />
      </section>
    </aside>
  );
}

export default function App() {
  return (
    <div className="flex min-h-screen flex-col bg-white font-['Open_Sans','Noto_Sans',sans-serif]">
      <Header />
      <div className="flex flex-1">
        <Sidebar />
        <main className="flex min-w-0 flex-1 flex-col pb-1">
          <Timeline />
          <div className="flex flex-1">
            <MapPanel />
            <ChartsPanel />
          </div>
        </main>
      </div>
    </div>
  );
}
